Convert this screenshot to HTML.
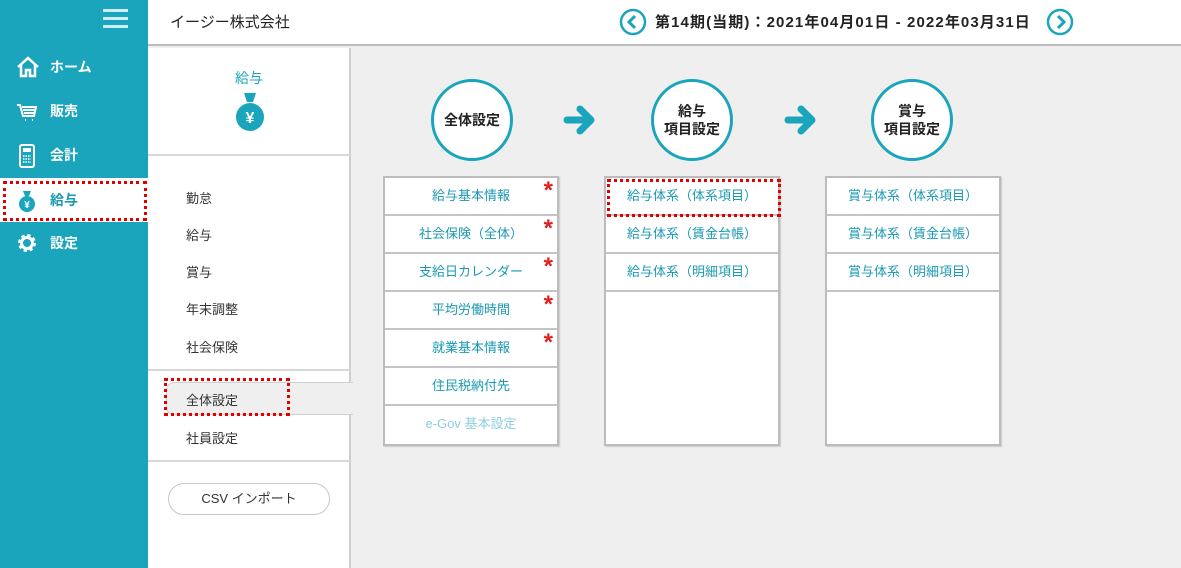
<!DOCTYPE html>
<html><head><meta charset="utf-8"><style>
*{margin:0;padding:0;box-sizing:border-box}
body{width:1181px;height:568px;position:relative;overflow:hidden;background:#efefef;font-family:"Liberation Sans","Noto Sans CJK JP",sans-serif;font-size:13px;color:#333}
.abs{position:absolute}
#side{left:0;top:0;width:148px;height:568px;background:#1aa5bc}
.nav{position:absolute;left:0;width:148px;height:44px;color:#fff;font-weight:bold;font-size:14px;line-height:44px;padding-left:50px}
.nav svg{position:absolute;left:16px;top:11px}
#head{left:148px;top:0;width:1033px;height:46px;background:#fff;border-bottom:2px solid #bdbdbd}
#sub{left:148px;top:48px;width:203px;height:520px;background:#fff;border-right:2px solid #cfcfcf}
.si{position:absolute;left:38px;font-size:13px;color:#333}
.hr{position:absolute;left:0;width:202px;height:2px;background:#d8d8d8}
.circ{position:absolute;width:82px;height:82px;border-radius:50%;border:3px solid #1aa5bc;background:#fff;display:flex;align-items:center;justify-content:center;text-align:center;font-weight:bold;font-size:14px;color:#222;line-height:18px}
.box{position:absolute;width:176px;height:270px;background:#fff;border:2px solid #bcbcbc;box-shadow:1px 1px 1px #ccc}
.row{height:38px;border-bottom:2px solid #c4c4c4;text-align:center;line-height:36px;color:#1a9ab2;font-size:13px;position:relative}
.star{position:absolute;right:4px;top:-5px;color:#e02020;font-size:24px;font-weight:bold}
.dot{position:absolute;border:3px dotted #e00000}
</style></head><body>
<div id="side" class="abs">
  <div class="abs" style="left:103px;top:9px;width:25px;height:3px;background:#cfeef3;box-shadow:0 8px 0 #cfeef3,0 16px 0 #cfeef3"></div>
  <div class="nav" style="top:45px"><svg width="24" height="22" viewBox="0 0 24 22"><path d="M2 11L12 2l10 9M5 9v11h5v-6h4v6h5V9" fill="none" stroke="#fff" stroke-width="2.5"/></svg>ホーム</div>
  <div class="nav" style="top:89px"><svg width="22" height="22" viewBox="0 0 22 22"><path d="M1 5h3l3 11h11l2-9H6M9 20h1M16 20h1M7 10h12M8 13h10" fill="none" stroke="#fff" stroke-width="2"/></svg>販売</div>
  <div class="nav" style="top:133px"><svg width="22" height="24" viewBox="0 0 22 24"><rect x="4" y="1" width="14" height="22" rx="2" fill="none" stroke="#fff" stroke-width="2"/><rect x="7" y="4" width="8" height="4" fill="#fff"/><path d="M7 12h8M7 15h8M7 18h8" stroke="#fff" stroke-width="1.5" stroke-dasharray="1.5 1"/></svg>会計</div>
  <div class="nav" style="top:178px;background:#fff;color:#1a9ab2"><svg width="22" height="24" viewBox="0 0 22 24"><path d="M7 2h8l-2 5h-4z" fill="#1aa5bc"/><circle cx="11" cy="15" r="8" fill="#1aa5bc"/><text x="11" y="19" fill="#fff" font-size="10" text-anchor="middle" font-family="Liberation Sans">¥</text></svg>給与</div>
  <div class="nav" style="top:221px"><svg width="22" height="22" viewBox="0 0 22 22"><circle cx="11" cy="11" r="7" fill="none" stroke="#fff" stroke-width="4" stroke-dasharray="3 2.5"/><circle cx="11" cy="11" r="5.5" fill="none" stroke="#fff" stroke-width="3"/></svg>設定</div>
  <div class="dot" style="left:3px;top:181px;width:144px;height:40px"></div>
</div>
<div id="head" class="abs">
  <div class="abs" style="left:22px;top:11px;font-size:15px;color:#222">イージー株式会社</div>
  <svg class="abs" style="left:471px;top:8px" width="28" height="28"><circle cx="14" cy="14" r="12" fill="#fff" stroke="#1aa5bc" stroke-width="2.5"/><path d="M16 8l-6 6 6 6" fill="none" stroke="#1aa5bc" stroke-width="3"/></svg>
  <div class="abs" style="left:507px;top:11px;font-size:15px;font-weight:bold;color:#222;letter-spacing:1.1px;white-space:nowrap">第14期(当期)：2021年04月01日 - 2022年03月31日</div>
  <svg class="abs" style="left:898px;top:8px" width="28" height="28"><circle cx="14" cy="14" r="12" fill="#fff" stroke="#1aa5bc" stroke-width="2.5"/><path d="M12 8l6 6-6 6" fill="none" stroke="#1aa5bc" stroke-width="3"/></svg>
</div>
<div id="sub" class="abs">
  <div class="abs" style="left:0;width:202px;top:20px;text-align:center;color:#1aa5bc;font-size:14px">給与</div>
  <svg class="abs" style="left:85px;top:44px" width="34" height="40" viewBox="0 0 34 40"><path d="M11 1h12l-3 9h-6z" fill="#1aa5bc"/><circle cx="17" cy="25" r="14" fill="#1aa5bc"/><text x="17" y="31" fill="#fff" font-size="16" font-weight="bold" text-anchor="middle" font-family="Liberation Sans">¥</text></svg>
  <div class="hr" style="top:106px"></div>
  <div class="si" style="top:140px">勤怠</div>
  <div class="si" style="top:177px">給与</div>
  <div class="si" style="top:214px">賞与</div>
  <div class="si" style="top:251px">年末調整</div>
  <div class="si" style="top:289px">社会保険</div>
  <div class="hr" style="top:321px"></div>
  <div class="abs" style="left:18px;top:334px;width:187px;height:33px;background:#efefef;border:1px solid #d0d0d0;border-right:none;border-radius:8px 0 0 8px"></div>
  <div class="si" style="top:342px">全体設定</div>
  <div class="si" style="top:380px">社員設定</div>
  <div class="hr" style="top:412px"></div>
  <div class="abs" style="left:20px;top:435px;width:162px;height:32px;border:1px solid #c8c8c8;border-radius:16px;text-align:center;line-height:30px;font-size:13px">CSV インポート</div>
  <div class="dot" style="left:16px;top:330px;width:126px;height:38px"></div>
</div>
<div class="circ" style="left:431px;top:79px">全体設定</div>
<div class="circ" style="left:651px;top:79px">給与<br>項目設定</div>
<div class="circ" style="left:871px;top:79px">賞与<br>項目設定</div>
<svg class="abs" style="left:563px;top:104px" width="36" height="32"><path d="M4 16h24M17 5l11 11-11 11" fill="none" stroke="#1aa5bc" stroke-width="7" stroke-linecap="round" stroke-linejoin="round"/></svg>
<svg class="abs" style="left:784px;top:104px" width="36" height="32"><path d="M4 16h24M17 5l11 11-11 11" fill="none" stroke="#1aa5bc" stroke-width="7" stroke-linecap="round" stroke-linejoin="round"/></svg>
<div class="box" style="left:383px;top:176px">
  <div class="row">給与基本情報<span class="star">*</span></div>
  <div class="row">社会保険（全体）<span class="star">*</span></div>
  <div class="row">支給日カレンダー<span class="star">*</span></div>
  <div class="row">平均労働時間<span class="star">*</span></div>
  <div class="row">就業基本情報<span class="star">*</span></div>
  <div class="row">住民税納付先</div>
  <div class="row" style="color:#8fd0dd;border-bottom:none">e-Gov 基本設定</div>
</div>
<div class="box" style="left:604px;top:176px">
  <div class="row">給与体系（体系項目）</div>
  <div class="row">給与体系（賃金台帳）</div>
  <div class="row">給与体系（明細項目）</div>
</div>
<div class="box" style="left:825px;top:176px">
  <div class="row">賞与体系（体系項目）</div>
  <div class="row">賞与体系（賃金台帳）</div>
  <div class="row">賞与体系（明細項目）</div>
</div>
<div class="dot" style="left:607px;top:179px;width:174px;height:38px"></div>
</body></html>
